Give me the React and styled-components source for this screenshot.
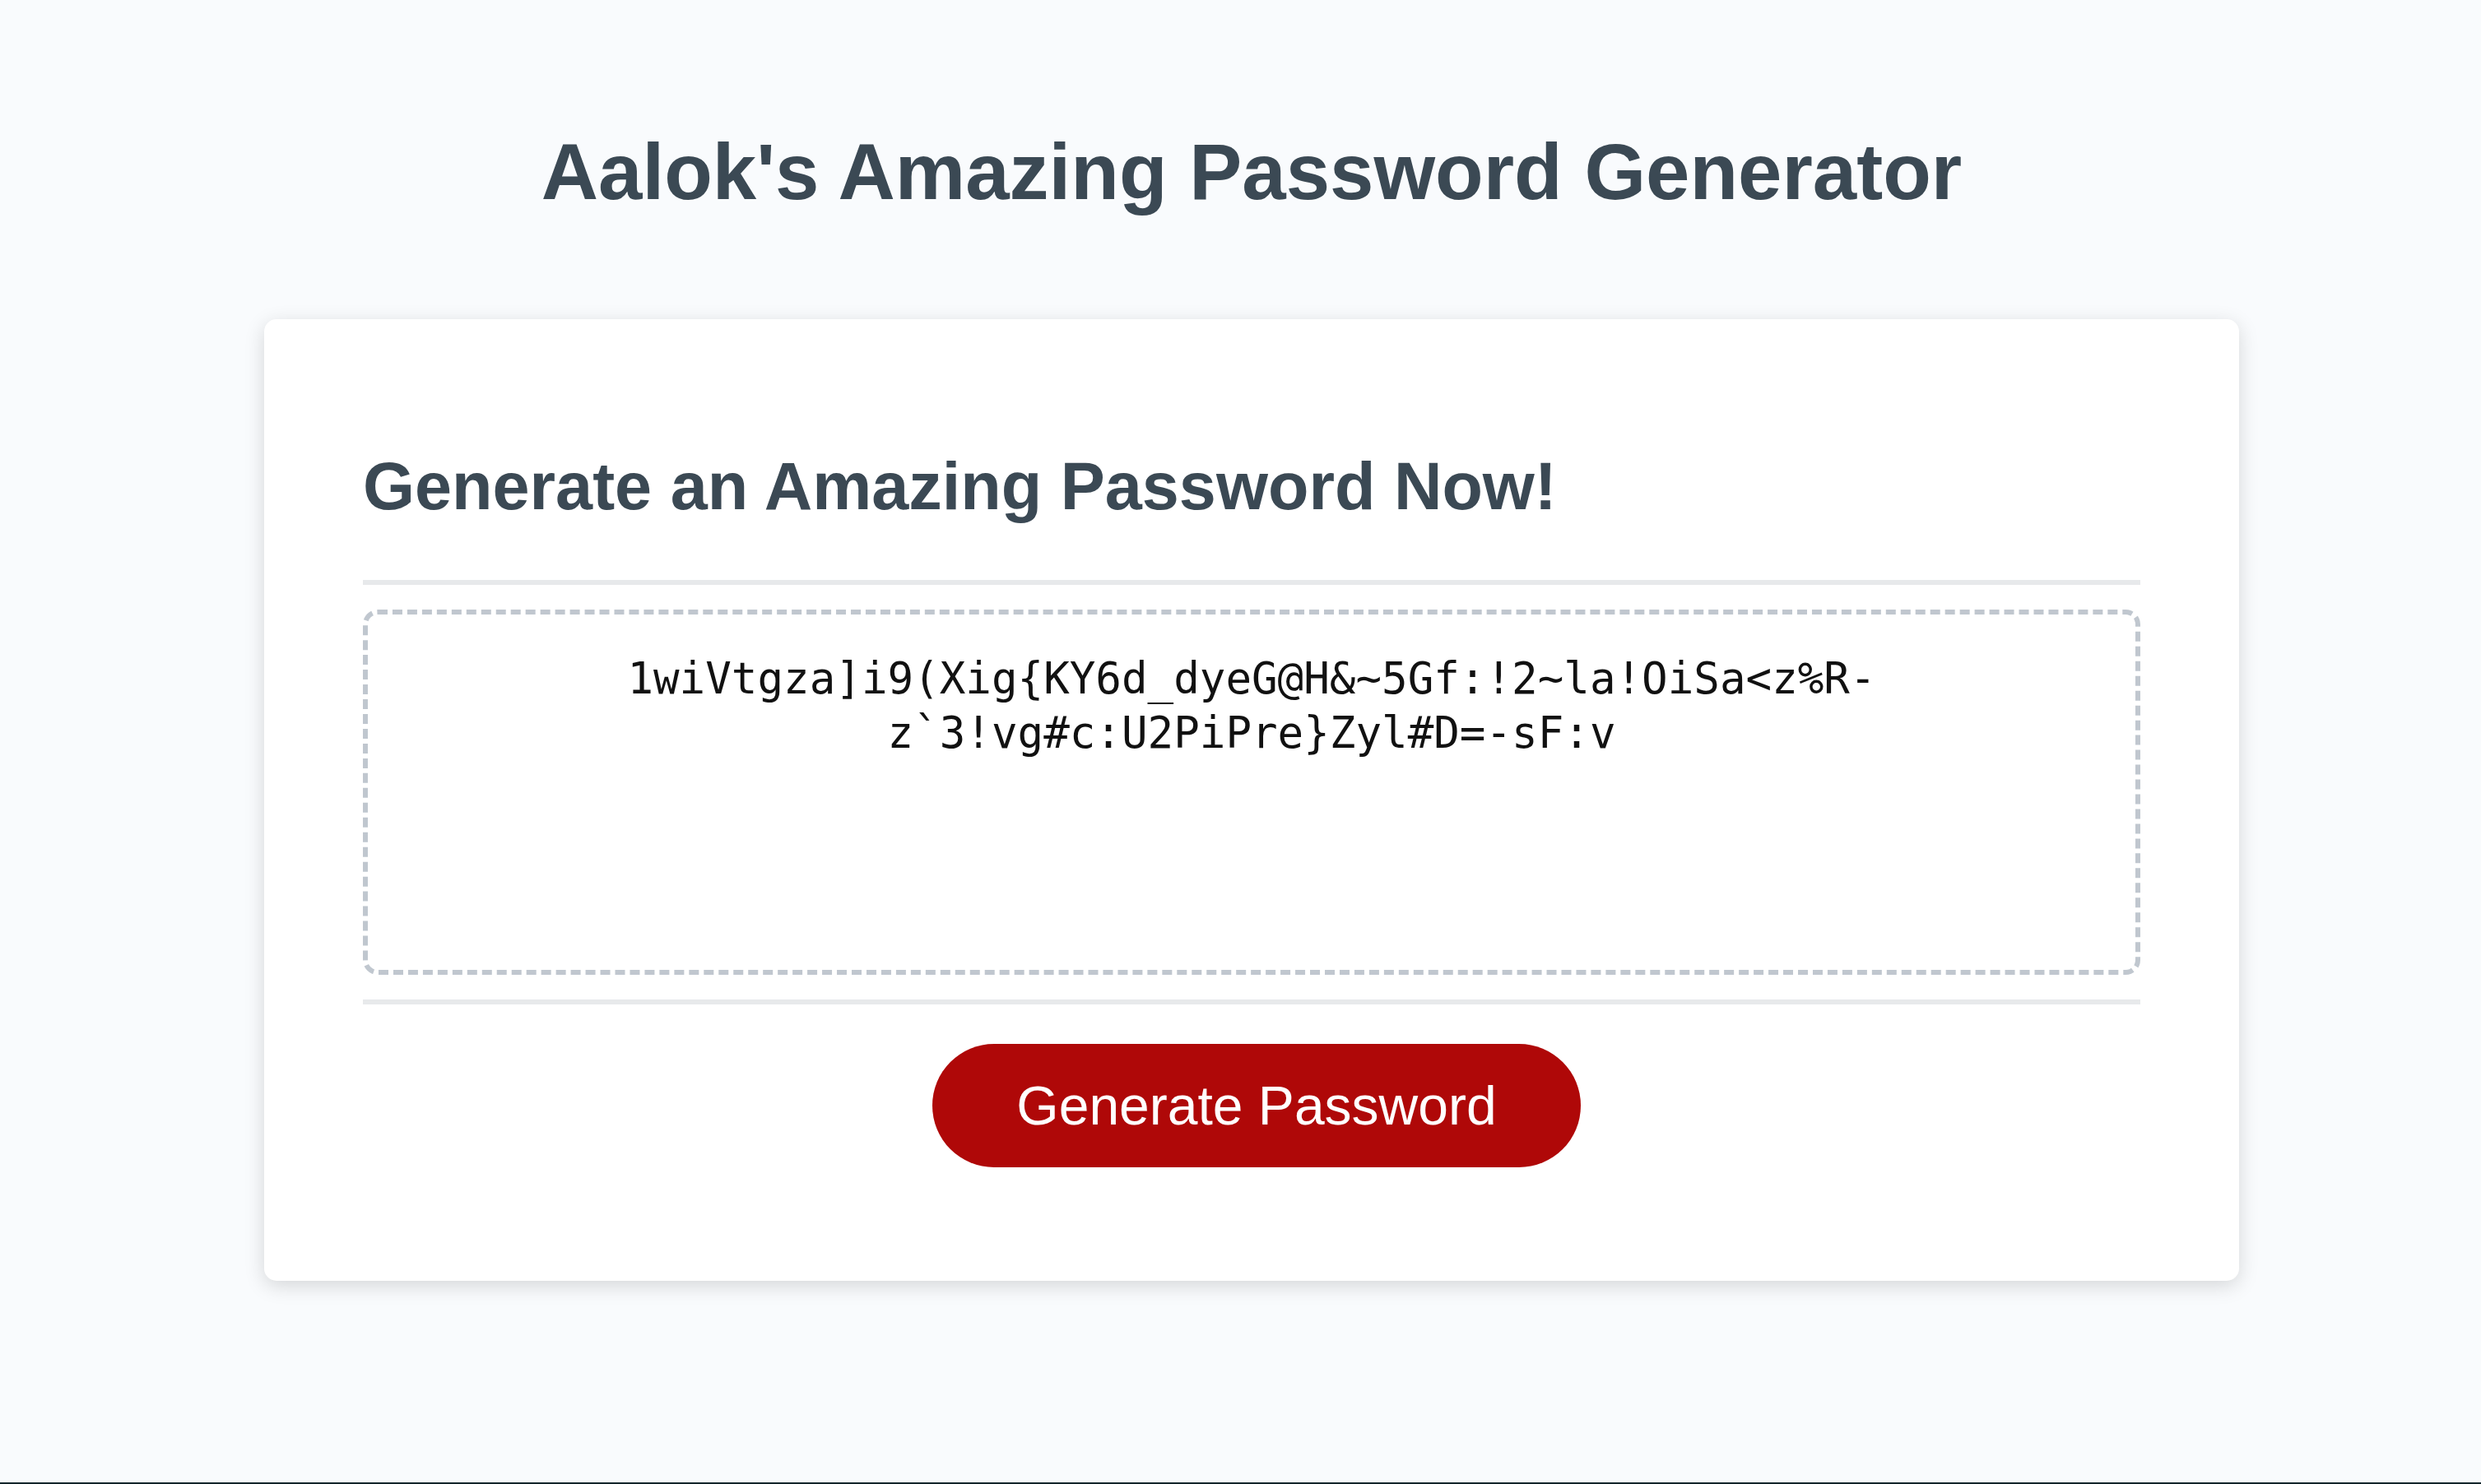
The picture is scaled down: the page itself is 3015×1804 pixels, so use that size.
import React from 'react';
import styled, { createGlobalStyle } from 'styled-components';

const PASSWORD = '1wiVtgza]i9(Xig{KY6d_dyeG@H&~5Gf:!2~la!OiSa<z%R-z`3!vg#c:U2PiPre}Zyl#D=-sF:v';

const GlobalStyle = createGlobalStyle`
  *, *::before, *::after {
    box-sizing: border-box;
  }

  html, body {
    margin: 0;
    padding: 0;
    background-color: #f9fbfd;
    font-family: "Liberation Sans", Arial, sans-serif;
  }
`;

class App extends React.Component {
  render() {
    return (
      <>
        <GlobalStyle />
        <Page>
          <Wrapper>
            <Header>
              <h1>Aalok's Amazing Password Generator</h1>
            </Header>

            <Card>
              <CardHeader>
                <h2>Generate an Amazing Password Now!</h2>
              </CardHeader>

              <CardBody>
                <PasswordBox
                  readOnly
                  rows={2}
                  value={PASSWORD}
                  aria-label="Generated Password"
                />
              </CardBody>

              <CardFooter>
                <Button type="button">Generate Password</Button>
              </CardFooter>
            </Card>
          </Wrapper>
          <BottomRule />
        </Page>
      </>
    );
  }
}

const Page = styled.div`
  min-height: 100vh;
  display: flex;
  flex-direction: column;
`;

const Wrapper = styled.div`
  flex: 1;
  padding: 90px 60px 0 87px;
`;

const Header = styled.header`
  text-align: center;
  padding: 0 60px 60px;
  color: hsl(206, 17%, 28%);

  h1 {
    font-size: 96px;
    line-height: 110px;
    font-weight: bold;
    margin: 64px 0;
  }
`;

const Card = styled.div`
  background-color: #fff;
  border-radius: 15px;
  box-shadow: rgba(0, 0, 0, 0.15) 0 6px 24px 0;
  color: hsl(206, 17%, 28%);
  max-width: 2400px;
  margin: 0 auto;
  padding: 90px 120px;
`;

const CardHeader = styled.div`
  &::after {
    content: ' ';
    display: block;
    width: 100%;
    height: 6px;
    background: #e7e9eb;
  }

  h2 {
    font-size: 81px;
    line-height: 93px;
    font-weight: bold;
    margin: 67px 0;
  }
`;

const CardBody = styled.div`
  min-height: 300px;
`;

const PasswordBox = styled.textarea`
  appearance: none;
  display: block;
  width: 100%;
  margin: 30px 0;
  padding: 45px 45px 255px;
  border: 6px dashed #c0c7cf;
  border-radius: 18px;
  font-family: "DejaVu Sans Mono", "Liberation Mono", monospace;
  font-size: 52.5px;
  line-height: 66px;
  color: #111;
  text-align: center;
  resize: none;
  overflow: hidden;
  outline: none;
`;

const CardFooter = styled.div`
  text-align: center;

  &::before {
    content: ' ';
    display: block;
    width: 100%;
    height: 6px;
    background: #e7e9eb;
  }
`;

const Button = styled.button`
  display: inline-block;
  border: none;
  background-color: hsl(360, 91%, 36%);
  border-radius: 75px;
  color: #fff;
  font-family: "Liberation Sans", Arial, sans-serif;
  font-size: 66px;
  line-height: 66px;
  margin: 48px 48px 48px 60px;
  padding: 42px 102px;
  cursor: pointer;
`;

const BottomRule = styled.div`
  height: 2px;
  background: #13252b;
`;

export default App;
